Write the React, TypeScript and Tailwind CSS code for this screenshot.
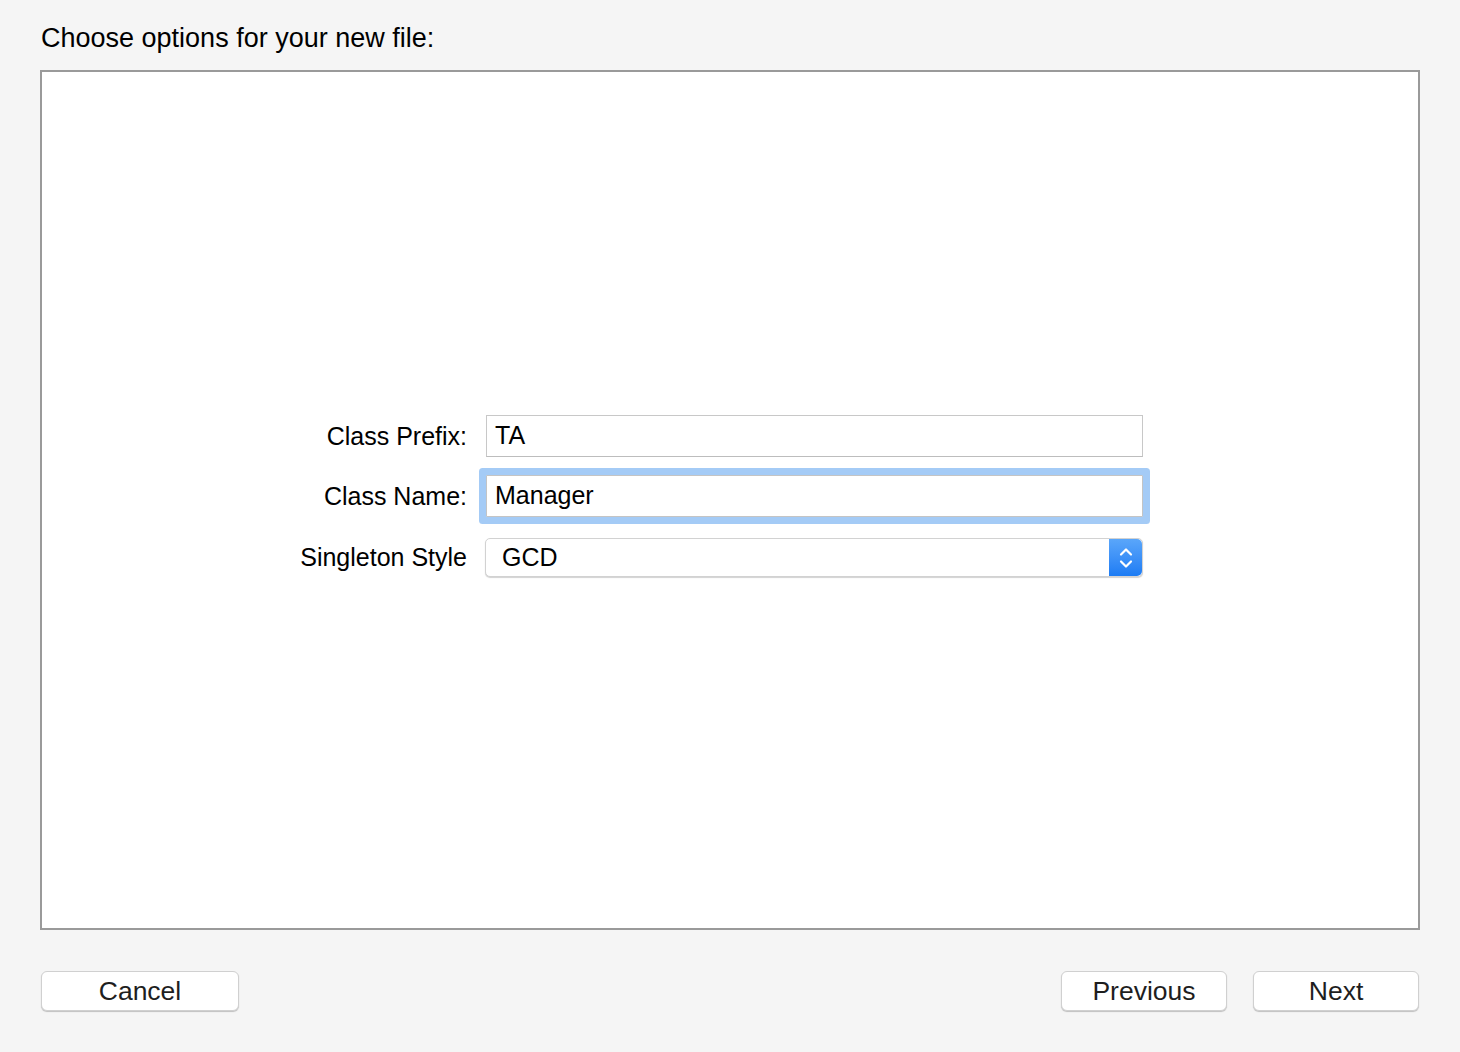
/**
 * Xcode-style "Choose options for your new file" sheet:
 * a bordered white panel with three form rows and the footer buttons.
 */

const font = { fontFamily: '"Liberation Sans", Arial, sans-serif' };

function Label({ children }: { children: React.ReactNode }) {
  return <div className="w-[200px] shrink-0 text-right text-[25px] leading-none text-black">{children}</div>;
}

function TextField({ value, focused }: { value: string; focused?: boolean }) {
  return (
    <div
      className={
        focused
          ? "flex h-[42px] w-[657px] items-center border border-[#c4c4c4] bg-white px-[8px] text-[25px] text-black shadow-[0_0_0_7px_#a4cbf6] rounded-[1px]"
          : "flex h-[42px] w-[657px] items-center border border-[#c8c8c8] border-b-[#bdbdbd] bg-white px-[8px] text-[25px] text-black"
      }
    >
      {value}
    </div>
  );
}

function Stepper() {
  return (
    <div className="flex h-full w-[33px] items-center justify-center rounded-r-[5px] bg-gradient-to-b from-[#5aa6fa] to-[#1c7cf4]">
      <svg width="16" height="26" viewBox="0 0 16 26" fill="none" stroke="white" strokeWidth="2.2" strokeLinecap="round" strokeLinejoin="round">
        <path d="M3 9.5 L8 4.5 L13 9.5" />
        <path d="M3 16.5 L8 21.5 L13 16.5" />
      </svg>
    </div>
  );
}

function PopUp({ value }: { value: string }) {
  return (
    <div className="flex h-[39px] w-[658px] items-stretch rounded-[5px] border border-[#d2d2d2] bg-white shadow-[0_1px_1px_rgba(0,0,0,0.18)]">
      <div className="flex flex-1 items-center pl-[16px] text-[25px] text-black">{value}</div>
      <Stepper />
    </div>
  );
}

function Button({ label, width }: { label: string; width: string }) {
  return (
    <button
      type="button"
      className={`${width} h-[40px] rounded-[6px] border border-[#d0d0d0] bg-white text-[26.5px] leading-none text-[#1e1e1e] shadow-[0_1px_1px_rgba(0,0,0,0.22)]`}
    >
      {label}
    </button>
  );
}

export default function App() {
  return (
    <div className="h-[1052px] w-[1460px] bg-[#f5f5f5]" style={font}>
      <div className="pl-[41px] pt-[23px] text-[27px] leading-[30px] text-black">Choose options for your new file:</div>

      <div className="ml-[40px] mt-[17px] h-[860px] w-[1380px] border-2 border-[#9a9a9a] bg-white pt-[343px]">
        <div className="flex flex-col gap-[18px] pl-[225px]">
          <div className="flex items-center gap-[19px]">
            <Label>Class Prefix:</Label>
            <TextField value="TA" />
          </div>
          <div className="flex items-center gap-[19px]">
            <Label>Class Name:</Label>
            <TextField value="Manager" focused />
          </div>
          <div className="mt-[3px] flex items-center gap-[18px]">
            <Label>Singleton Style</Label>
            <PopUp value="GCD" />
          </div>
        </div>
      </div>

      <div className="mt-[41px] flex items-center pl-[41px] pr-[41px]">
        <Button label="Cancel" width="w-[198px]" />
        <div className="ml-auto flex gap-[26px]">
          <Button label="Previous" width="w-[166px]" />
          <Button label="Next" width="w-[166px]" />
        </div>
      </div>
    </div>
  );
}
